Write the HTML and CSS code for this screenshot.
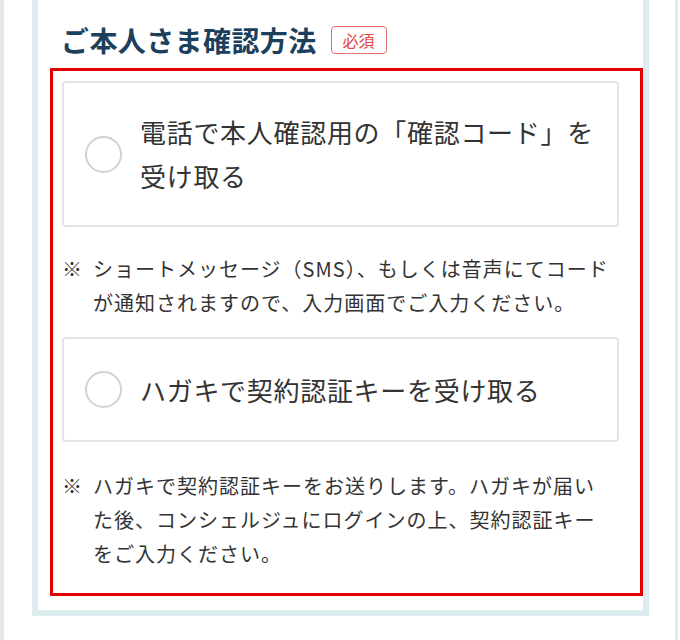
FILE: index.html
```html
<!DOCTYPE html>
<html lang="ja">
<head>
<meta charset="utf-8">
<title>ご本人さま確認方法</title>
<link rel="stylesheet" href="styles.css">
</head>
<body>
<div class="page">
  <section class="card">
    <div class="title-row">
      <h2 class="title">ご本人さま確認方法</h2>
      <span class="badge">必須</span>
    </div>
    <div class="highlight">
      <label class="option option-tall">
        <span class="radio"></span>
        <span class="option-text">電話で本人確認用の「確認コード」を<br>受け取る</span>
      </label>
      <div class="note">
        <span class="mark">※</span>
        <p class="note-text">ショートメッセージ（<span class="abbr">SMS</span>）、もしくは音声にてコード<br>が通知されますので、入力画面でご入力ください。</p>
      </div>
      <label class="option">
        <span class="radio"></span>
        <span class="option-text">ハガキで契約認証キーを受け取る</span>
      </label>
      <div class="note note-last">
        <span class="mark">※</span>
        <p class="note-text">ハガキで契約認証キーをお送りします。ハガキが届い<br>た後、コンシェルジュにログインの上、契約認証キー<br>をご入力ください。</p>
      </div>
    </div>
  </section>
</div>
</body>
</html>
```

FILE: styles.css
```css
* {
  box-sizing: border-box;
}

html, body {
  margin: 0;
  padding: 0;
  background: #ffffff;
}

body {
  font-family: "Noto Sans CJK JP", "Noto Sans", sans-serif;
  color: #333333;
}

.page {
  width: 678px;
  height: 640px;
  border-left: 4px solid #e4e7ec;
  border-right: 3px solid #e4e7ec;
  padding-left: 28px;
}

.card {
  width: 617px;
  border: 6px solid #dcecef;
  border-top: 0;
  padding: 20px 0 14px 12px;
  background: #ffffff;
}

.title-row {
  display: flex;
  align-items: center;
  gap: 14px;
  height: 40px;
  margin: 0 0 8px 11px;
}

.title {
  margin: 0;
  font-size: 28px;
  line-height: 40px;
  font-weight: 700;
  letter-spacing: 0.4px;
  color: #1c3f5d;
}

.badge {
  display: flex;
  align-items: center;
  justify-content: center;
  width: 56px;
  height: 28px;
  border: 1.5px solid #e27070;
  border-radius: 4px;
  color: #e04848;
  font-size: 16px;
  line-height: 1;
}

.highlight {
  border: 3px solid #e50000;
  padding: 10px 21px 0 9px;
}

.option {
  display: flex;
  align-items: center;
  gap: 18px;
  min-height: 105px;
  padding: 27px 20px 27px 21px;
  border: 2px solid #e4e4e4;
  border-radius: 4px;
  background: #ffffff;
}

.option-tall {
  min-height: 146px;
}

.radio {
  flex: none;
  width: 37px;
  height: 37px;
  border: 2px solid #d2d2d2;
  border-radius: 50%;
  background: #ffffff;
}

.option-text {
  font-size: 26px;
  line-height: 44px;
  letter-spacing: 0.7px;
  color: #333333;
}

.note {
  display: grid;
  grid-template-columns: 31px 1fr;
  padding: 25px 0 17px 0;
  font-size: 20px;
  line-height: 34px;
  letter-spacing: 1px;
  color: #333333;
}

.note-last {
  padding-top: 27px;
  padding-bottom: 22px;
}

.mark {
  display: block;
}

.note-text {
  margin: 0;
  white-space: nowrap;
}

.abbr {
  letter-spacing: 1px;
}
```
